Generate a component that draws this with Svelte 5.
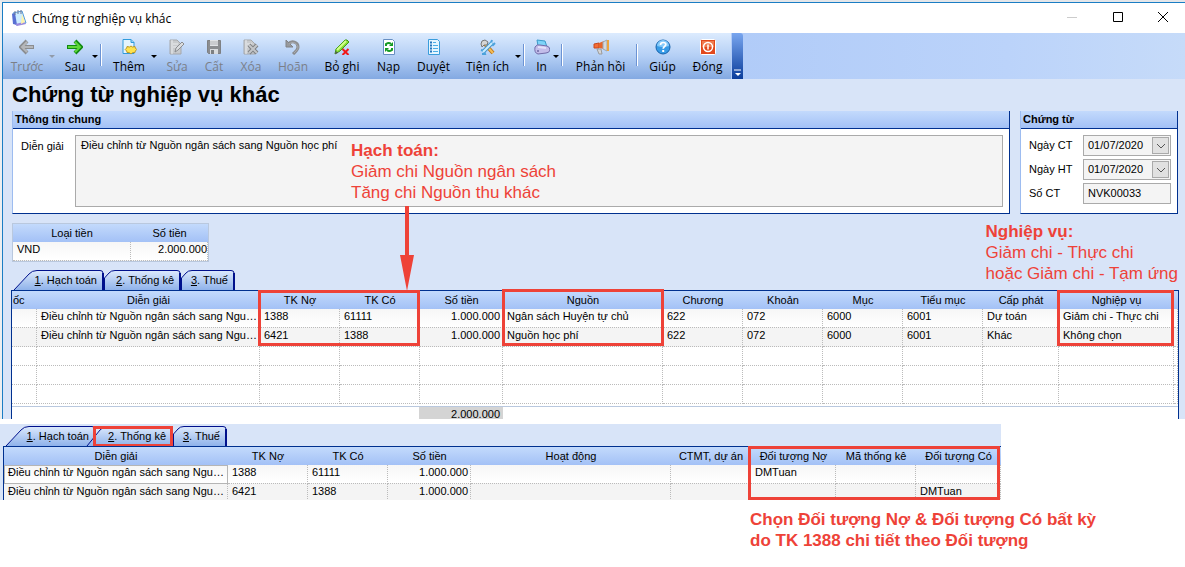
<script lang="ts">
	type Tool = {
		icon: string;
		label: string;
		width: number;
		disabled?: boolean;
		menu?: boolean;
		separator?: boolean;
	};

	const tools: Tool[] = [
		{ icon: 'back', label: 'Trước', width: 48, disabled: true, menu: true },
		{ icon: 'next', label: 'Sau', width: 38, menu: true, separator: true },
		{ icon: 'add', label: 'Thêm', width: 48, menu: true },
		{ icon: 'edit', label: 'Sửa', width: 38, disabled: true },
		{ icon: 'save', label: 'Cất', width: 36, disabled: true },
		{ icon: 'delete', label: 'Xóa', width: 38, disabled: true },
		{ icon: 'undo', label: 'Hoãn', width: 46, disabled: true },
		{ icon: 'unpost', label: 'Bỏ ghi', width: 52 },
		{ icon: 'reload', label: 'Nạp', width: 41 },
		{ icon: 'browse', label: 'Duyệt', width: 49 },
		{ icon: 'utility', label: 'Tiện ích', width: 59, menu: true, separator: true },
		{ icon: 'print', label: 'In', width: 27, menu: true, separator: true },
		{ icon: 'feedback', label: 'Phản hồi', width: 69, separator: true },
		{ icon: 'help', label: 'Giúp', width: 43 },
		{ icon: 'close', label: 'Đóng', width: 47 }
	];

	const tabs = [
		{ key: '1', label: 'Hạch toán', width: 92 },
		{ key: '2', label: 'Thống kê', width: 77 },
		{ key: '3', label: 'Thuế', width: 54 }
	];

	const description = 'Điều chỉnh từ Nguồn ngân sách sang Nguồn học phí';

	// a column without a width takes what is left
	const entryColumns = [
		{ label: 'ốc', width: 25 },
		{ label: 'Diễn giải' },
		{ label: 'TK Nợ', width: 80 },
		{ label: 'TK Có', width: 80 },
		{ label: 'Số tiền', width: 83, number: true },
		{ label: 'Nguồn', width: 160 },
		{ label: 'Chương', width: 80 },
		{ label: 'Khoản', width: 80 },
		{ label: 'Mục', width: 80 },
		{ label: 'Tiểu mục', width: 80 },
		{ label: 'Cấp phát', width: 76 },
		{ label: 'Nghiệp vụ', width: 115 },
		{ label: '', width: 4 }
	];
	const blank = entryColumns.map(() => '');
	const entryRows = [
		['', description, '1388', '61111', '1.000.000', 'Ngân sách Huyện tự chủ', '622', '072', '6000', '6001', 'Dự toán', 'Giảm chi - Thực chi', ''],
		['', description, '6421', '1388', '1.000.000', 'Nguồn học phí', '622', '072', '6000', '6001', 'Khác', 'Không chọn', ''],
		blank,
		blank,
		blank
	];

	const statColumns = [
		{ label: 'Diễn giải' },
		{ label: 'TK Nợ', width: 80 },
		{ label: 'TK Có', width: 80 },
		{ label: 'Số tiền', width: 83, number: true },
		{ label: 'Hoạt động', width: 200 },
		{ label: 'CTMT, dự án', width: 80 },
		{ label: 'Đối tượng Nợ', width: 85 },
		{ label: 'Mã thống kê', width: 80 },
		{ label: 'Đối tượng Có', width: 85 }
	];
	const statRows = [
		[description, '1388', '61111', '1.000.000', '', '', 'DMTuan', '', ''],
		[description, '6421', '1388', '1.000.000', '', '', '', '', 'DMTuan']
	];

	let dateCT = $state('01/07/2020');
	let dateHT = $state('01/07/2020');
	let voucherNo = $state('NVK00033');
	let entryTab = $state('1');
	let statTab = $state('2');

	// the first and the selected tab show their whole slope, the others only its top
	function tabPath(first: boolean, selected: boolean, w: number) {
		let start = 'M.5 20 V8 L5 3 Q7 .5 11 .5';
		if (first) {
			start = 'M2 20 L17 4 Q20 .5 25 .5';
		} else if (selected) {
			start = 'M-9 20 L4 4 Q7 .5 11 .5';
		}
		return `${start} H${w - 4} Q${w - 1} .5 ${w - 1} 3 V20`;
	}
</script>

{#snippet icon(name: string)}
	<svg class="icon" viewBox="0 0 16 16" width="16" height="16" aria-hidden="true">
		{#if name === 'back'}
			<path d="M15 8H3M8 2L2 8l6 6" fill="none" stroke="#858585" stroke-width="4" />
			<path d="M14 8H3M8 3L3 8l5 5" fill="none" stroke="#b4b4b4" stroke-width="2" />
		{:else if name === 'next'}
			<path d="M0 8h13M8 2l6 6-6 6" fill="none" stroke="#128a12" stroke-width="4" />
			<path d="M1 8h12M8 3l5 5-5 5" fill="none" stroke="#5fd838" stroke-width="2" />
		{:else if name === 'add'}
			<path d="M2 .5h8l3 3v11H2z" fill="#e4f4fe" stroke="#2f9bdc" />
			<path d="M10 .5v3h3" fill="#9bd2f5" stroke="#2f9bdc" />
			<path d="M10 7l1.500 1 2.500-.5.300 1.500 1.500 1.500-1.500 1.500-.3 1.500-2.500.2L10 15l-1.500-1.300-2.500-.2-.3-1.500L4.200 10.500 5.700 9 6 7.500 8.500 8z" fill="#ffe34d" stroke="#b8962a" />
		{:else if name === 'edit' || name === 'delete'}
			<path d="M1 1h7l4 4v10H1z" fill="#c9c9c9" stroke="#a3a3a3" />
			<path d="M3 1v14M4 5h5M4 8h6" stroke="#eee" />
			{#if name === 'edit'}
				<path d="M6 13l1-4 6-6 2 2-6 6z" fill="#ddd" stroke="#858585" />
			{:else}
				<path d="M6 6l8 8M14 6l-8 8" stroke="#777" stroke-width="4" />
				<path d="M6 6l8 8M14 6l-8 8" stroke="#c4c4c4" stroke-width="2" />
			{/if}
		{:else if name === 'save'}
			<path d="M1.500 1.500h13v13h-12l-1-1z" fill="#858585" stroke="#777" />
			<path d="M4 1h8v6H4z" fill="#e4e4e4" />
			<path d="M4 3h8M4 5h8" stroke="#b0b0b0" />
			<path d="M4 10h8v5H4z" fill="#ddd" />
			<path d="M5 11h3v4H5z" fill="#777" />
		{:else if name === 'undo'}
			<path d="M3 5C7 1 13 3 13 8c0 3-2 4-5 7" fill="none" stroke="#858585" stroke-width="3" />
			<path d="M1 1v7h7z" fill="#929292" stroke="#7a7a7a" />
			<path d="M4 5c4-3 8-1 9 3 0 2-1 3-4 6" fill="none" stroke="#a8a8a8" />
		{:else if name === 'unpost'}
			<path d="M1 15l1-5 9-9q2-1 4 2l-9 9z" fill="#86dd35" stroke="#3f9a16" />
			<path d="M3 11l9-9" stroke="#d1ff8c" stroke-width="2" />
			<path d="M1 15l1-3 2 2z" fill="#555" />
			<path d="M8.500 10l6 6M14.500 10l-6 6" stroke="#f01818" stroke-width="2" />
		{:else if name === 'reload'}
			<path d="M2.500.5h9l2 2v13h-11z" fill="#fff" stroke="#668ec2" />
			<path d="M5 7V5q3-2 5 0" fill="none" stroke="#159a23" stroke-width="2" />
			<path d="M12 3v4H8z" fill="#159a23" />
			<path d="M11 9v2q-3 2-5 0" fill="none" stroke="#159a23" stroke-width="2" />
			<path d="M4 13V9h4z" fill="#159a23" />
		{:else if name === 'browse'}
			<path d="M2.500.5h9l2 2v13h-11z" fill="#e5f6ff" stroke="#3a9ddc" />
			<path d="M7 3.500h3M7 6.500h5M7 9.500h5M7 12.500h5" stroke="#4baee6" />
			<path d="M4 3.500h2M4 6.500h2M4 9.500h2M4 12.500h2" stroke="#2576bd" stroke-width="2" />
		{:else if name === 'utility'}
			<path d="M5 5l8 9" stroke="#bb761b" stroke-width="4" />
			<path d="M5 5l8 9" stroke="#f5bd55" stroke-width="2" />
			<path d="M1 5l1-3 3-1 3 2-1 3-3 0-2 2z" fill="#d5d5d5" stroke="#777" />
			<path d="M3 13l9-9" stroke="#4b94cb" stroke-width="4" />
			<path d="M12 1l-1 3 2 2 2-2M1 11l3 1 1 3-3 0" fill="none" stroke="#4ba2dc" stroke-width="2" />
			<path d="M3 13l9-9" stroke="#c8edff" stroke-width="2" />
		{:else if name === 'print'}
			<path d="M3 1l8 1 2 6-9-1z" fill="#7ed3f8" stroke="#3a9ac9" />
			<path d="M1 8q2-3 5-2l7 1q3 1 3 4-1 3-4 3l-8 1q-4-1-3-7z" fill="#c3bdea" stroke="#726ca9" />
			<path d="M4 8l8 1" stroke="#e4e0fa" stroke-width="2" />
			<circle cx="4" cy="12" r="1" fill="#6c67a2" />
		{:else if name === 'feedback'}
			<path d="M1 5l5-1v5H1z" fill="#f36d35" stroke="#c7481d" />
			<path d="M6 4l5-2v8l-5-1z" fill="#e7662a" />
			<path d="M10 3l4-2v11l-4-2z" fill="#d4d9dc" stroke="#9ea6ab" />
			<path d="M14 1h2v11h-2z" fill="#eba63f" />
			<path d="M4 10h4l1 5H6z" fill="#d6d6d6" stroke="#9b9b9b" />
		{:else if name === 'help'}
			<circle cx="8" cy="8" r="7" fill="#379be6" stroke="#1763ac" />
			<path d="M2 7a6 6 0 0112 0q-6 2-12 0" fill="#86cbfa" />
			<path d="M5.500 6q0-2.500 2.700-2.500 2.600 0 2.600 2c0 2-2.600 2-2.600 4.200" fill="none" stroke="#fff" stroke-width="1.700" />
			<path d="M7.200 11h2v2h-2z" fill="#fff" />
		{:else if name === 'close'}
			<rect x=".5" y=".5" width="15" height="15" rx="1" fill="#e2481c" stroke="#fff" />
			<path d="M2 2h12v6H2z" fill="#ef7b50" />
			<circle cx="8" cy="8" r="4.500" fill="none" stroke="#fff" stroke-width="1.500" />
			<path d="M8 5.500v5" stroke="#fff" stroke-width="1.500" />
		{/if}
	</svg>
{/snippet}

{#snippet tabList(current: string, select: (key: string) => void)}
	<div class="tabs" role="tablist">
		{#each tabs as tab, i}
			<button class="tab" role="tab" aria-selected={tab.key === current} style:width="{tab.width}px" onclick={() => select(tab.key)}>
				<svg width={tab.width} height="20" aria-hidden="true">
					<path d={tabPath(i === 0, tab.key === current, tab.width)} fill="url(#tab-fill)" stroke="#00108c" stroke-width="1" />
					<path d="M{tab.width - 1} 3V20" stroke="#00108c" stroke-width="2" />
				</svg>
				<span><u>{tab.key}</u>. {tab.label}</span>
			</button>
		{/each}
	</div>
{/snippet}

{#snippet grid(columns: { label: string; width?: number; number?: boolean }[], rows: string[][])}
	<table>
		<colgroup>
			{#each columns as column}
				<col style:width={column.width ? `${column.width}px` : 'auto'} />
			{/each}
		</colgroup>
		<thead>
			<tr>
				{#each columns as column}
					<th>{column.label}</th>
				{/each}
			</tr>
		</thead>
		<tbody>
			{#each rows as row}
				<tr class:filled={row.some(Boolean)}>
					{#each row as cell, i}
						<td class:number={columns[i].number}>{cell}</td>
					{/each}
				</tr>
			{/each}
		</tbody>
	</table>
{/snippet}

<svg class="defs" width="0" height="0" aria-hidden="true">
	<linearGradient id="tab-fill" x1="0" y1="0" x2="0" y2="1">
		<stop offset="0" stop-color="#dce9fc" />
		<stop offset="1" stop-color="#8fb2ea" />
	</linearGradient>
</svg>

<main>
	<section class="window">
		<header class="titlebar">
			<svg width="16" height="16" viewBox="0 0 16 16" aria-hidden="true">
				<path d="M2 3l9-2 4 12-10 2z" fill="#ccecff" stroke="#599bd8" />
				<path d="M1 4l3-1 2 12-4-1z" fill="#5870d2" />
				<path d="M4 14l9-2 2 2-9 2z" fill="#9a8ade" />
				<path d="M11 4l3 8-4 2z" fill="#fff2a9" />
				<path d="M4 1v4M7 0v4M10 0v4" stroke="#6d7795" />
			</svg>
			<span class="caption">Chứng từ nghiệp vụ khác</span>
			<button aria-label="Thu nhỏ"><svg width="12" height="12"><path d="M1 6.500h10" stroke="#ccc" /></svg></button>
			<button aria-label="Phóng to"><svg width="12" height="12"><path d="M1.500 1.500h9v9h-9z" fill="none" stroke="#000" /></svg></button>
			<button aria-label="Đóng cửa sổ"><svg width="12" height="12"><path d="M1 1l10 10M11 1L1 11" stroke="#000" /></svg></button>
		</header>

		<nav class="toolbar">
			<div class="tools">
				{#each tools as tool}
					<button class="tool" disabled={tool.disabled} style:width="{tool.width}px">
						{@render icon(tool.icon)}
						<span>{tool.label}</span>
					</button>
					{#if tool.menu}
						<button class="drop" disabled={tool.disabled} aria-label="Mở {tool.label}"></button>
					{/if}
					{#if tool.separator}
						<i class="separator"></i>
					{/if}
				{/each}
			</div>
			<button class="overflow" aria-label="Tùy chọn">
				<svg width="8" height="8"><path d="M0 1h7" stroke="#fff" /><path d="M1 4h6l-3 3z" fill="#fff" /></svg>
			</button>
		</nav>

		<div class="content">
			<h1>Chứng từ nghiệp vụ khác</h1>

			<div class="panels">
				<section class="panel general">
					<h2>Thông tin chung</h2>
					<div class="panel-body">
						<label for="description">Diễn giải</label>
						<textarea id="description" readonly value={description}></textarea>
					</div>
				</section>
				<section class="panel voucher">
					<h2>Chứng từ</h2>
					<div class="fields">
						<label for="date-ct">Ngày CT</label>
						<div class="field">
							<input id="date-ct" bind:value={dateCT} />
							<button aria-label="Chọn ngày CT"><svg width="10" height="6"><path d="M1 1l4 4 4-4" fill="none" stroke="#555" /></svg></button>
						</div>
						<label for="date-ht">Ngày HT</label>
						<div class="field">
							<input id="date-ht" bind:value={dateHT} />
							<button aria-label="Chọn ngày HT"><svg width="10" height="6"><path d="M1 1l4 4 4-4" fill="none" stroke="#555" /></svg></button>
						</div>
						<label for="voucher-no">Số CT</label>
						<div class="field"><input id="voucher-no" bind:value={voucherNo} /></div>
					</div>
				</section>
			</div>

			<div class="currency">
				<table>
					<thead><tr><th>Loại tiền</th><th>Số tiền</th></tr></thead>
					<tbody><tr class="filled"><td>VND</td><td class="number">2.000.000</td></tr></tbody>
				</table>
			</div>

			{@render tabList(entryTab, (key) => (entryTab = key))}
			<div class="grid entries">
				{@render grid(entryColumns, entryRows)}
				<div class="total"><span>2.000.000</span></div>
				<div class="mark accounts"></div>
				<div class="mark source"></div>
				<div class="mark operation"></div>
			</div>
		</div>

		<div class="note note-entry">
			<strong>Hạch toán:</strong><br />
			Giảm chi Nguồn ngân sách<br />
			Tăng chi Nguồn thu khác
		</div>
		<svg class="arrow" width="16" height="85" viewBox="0 0 16 85" aria-hidden="true">
			<path d="M6 0h4v49h5L8 85 1 49h5z" fill="#ee4238" />
		</svg>
		<div class="note note-operation">
			<strong>Nghiệp vụ:</strong><br />
			Giảm chi - Thực chi<br />
			hoặc Giảm chi - Tạm ứng
		</div>
	</section>

	<section class="statistics">
		{@render tabList(statTab, (key) => (statTab = key))}
		<div class="mark active-tab"></div>
		<div class="grid">
			{@render grid(statColumns, statRows)}
			<div class="mark objects"></div>
		</div>
	</section>

	<p class="note note-objects">
		<strong>Chọn Đối tượng Nợ & Đối tượng Có bất kỳ<br />do TK 1388 chi tiết theo Đối tượng</strong>
	</p>
</main>

<style>
	:global(body) {
		background: #fff;
	}

	main {
		font-family: 'Liberation Sans', Arial, sans-serif;
		font-size: 11px;
		color: #000;
	}

	button,
	input,
	textarea {
		box-sizing: border-box;
		margin: 0;
		padding: 0;
		border: 0;
		border-radius: 0;
		background: none;
		font: inherit;
		color: inherit;
	}

	.defs {
		position: absolute;
	}

	.window {
		position: relative;
		border-top: 2px solid #e4e6e9;
		border-left: 2px solid #eceef0;
		background: #d8e4f8;
	}

	.titlebar {
		display: flex;
		align-items: center;
		height: 30px;
		padding-left: 8px;
		border-top: 1px solid #1a7dc4;
		border-left: 1px solid #1a7dc4;
		background: #fff;
	}

	.caption {
		flex: 1;
		padding-left: 5px;
		font: 12px 'Open Sans', sans-serif;
	}

	.titlebar button {
		width: 46px;
		height: 28px;
	}

	.titlebar button:last-child {
		width: 44px;
	}

	.toolbar {
		display: flex;
		height: 46px;
		border-left: 1px solid #1a7dc4;
		background: linear-gradient(90deg, #b0cbf8 60%, #bbd3fa 85%, #c6dbf9);
	}

	.tools {
		display: flex;
		background: linear-gradient(#dcebfe, #b4cff5 50%, #83a9e2);
	}

	.tool {
		display: flex;
		flex-direction: column;
		align-items: center;
		padding-top: 6px;
		font: 12px/18px 'Open Sans', sans-serif;
		white-space: nowrap;
	}

	.tool:disabled {
		color: #7b7f88;
	}

	.tool:disabled .icon {
		opacity: 0.9;
	}

	.icon {
		display: block;
	}

	.tool span {
		padding-top: 3px;
	}

	.drop {
		width: 9px;
		height: 46px;
		margin-left: -4px;
	}

	.drop::before {
		content: '';
		display: block;
		margin: 0 auto;
		width: 0;
		border: 3px solid transparent;
		border-top-color: #000;
		border-bottom: 0;
	}

	.drop:disabled::before {
		border-top-color: #919baa;
	}

	.separator {
		width: 1px;
		height: 22px;
		margin: 11px 3px 0 1px;
		border-left: 1px solid #6c93d4;
		background: #fff;
	}

	.overflow {
		width: 11px;
		margin-left: 1px;
		padding: 34px 0 0 2px;
		border-radius: 0 3px 0 0;
		background: linear-gradient(#79a6ef, #0a3d9c);
	}

	.overflow svg {
		display: block;
	}

	.content {
		padding: 0 6px 0 8px;
		border-left: 1px solid #1a7dc4;
	}

	h1 {
		margin: 0;
		padding-left: 1px;
		font-size: 22px;
		line-height: 32px;
	}

	.panels {
		display: flex;
		gap: 10px;
		padding: 0 1px;
	}

	.panel {
		box-sizing: border-box;
		border-left: 1px solid #9dbcf0;
		border-right: 1px solid #00308f;
		border-bottom: 1px solid #00308f;
		background: #fff;
	}

	.general {
		flex: 1;
	}

	.voucher {
		width: 158px;
	}

	h2 {
		margin: 0;
		padding-left: 2px;
		border-bottom: 1px solid #00308f;
		background: linear-gradient(#c3dafc, #a3c1f6);
		font-size: 11px;
		line-height: 17px;
	}

	.panel-body {
		display: flex;
		padding: 6px;
	}

	.panel-body label {
		width: 54px;
		padding-left: 2px;
		line-height: 22px;
	}

	textarea {
		flex: 1;
		height: 72px;
		padding: 2px 5px;
		border: 1px solid #aaa;
		background: #f4f4f4;
		line-height: 14px;
		resize: none;
	}

	.fields {
		display: grid;
		grid-template-columns: 54px minmax(0, 1fr);
		row-gap: 3px;
		padding: 6px 6px 0 8px;
		line-height: 21px;
	}

	.field {
		display: flex;
		box-sizing: border-box;
		height: 21px;
		padding: 1px;
		border: 1px solid #aaa;
		background: #f4f4f4;
	}

	.field input {
		flex: 1;
		min-width: 0;
		padding-left: 3px;
	}

	.field button {
		width: 17px;
		border: 1px solid #aaa;
		background: #e1e1e1;
	}

	.field svg {
		display: block;
		margin: auto;
	}

	table {
		width: 100%;
		border-spacing: 0;
		table-layout: fixed;
	}

	th {
		height: 18px;
		padding: 0;
		background: linear-gradient(#c3dafc, #a3c1f6);
		font-weight: normal;
		line-height: 18px;
		white-space: nowrap;
	}

	.entries :global(th:first-child) {
		padding-left: 1px;
		text-align: left;
	}

	td {
		box-sizing: border-box;
		height: 19px;
		padding: 0 2px 0 4px;
		overflow: hidden;
		border-right: 1px dotted #bbb;
		border-bottom: 1px dotted #bbb;
		line-height: 14px;
		text-overflow: ellipsis;
		vertical-align: top;
		white-space: nowrap;
	}

	.filled td {
		background: linear-gradient(#f6f6f6, #fff);
	}

	.filled:nth-child(2) td {
		background: #f4f4f4;
	}

	.number {
		text-align: right;
	}

	.currency {
		width: 195px;
		margin: 9px 0 8px 1px;
		border: 1px solid #b9c8de;
	}

	.currency th:first-child {
		width: 118px;
	}

	.currency .number {
		padding-right: 0;
	}

	.tabs {
		display: flex;
		height: 20px;
		padding-left: 1px;
	}

	.tab {
		position: relative;
		padding-right: 7px;
		line-height: 20px;
		text-align: right;
		white-space: nowrap;
	}

	.tab svg {
		position: absolute;
		inset: 0;
		overflow: visible;
	}

	.tab span {
		position: relative;
	}

	.grid {
		position: relative;
		border-top: 1px solid #00308f;
		border-left: 1px solid #00308f;
		background: #fff;
	}

	.entries {
		border-right: 1px solid #00308f;
	}

	.total {
		display: flex;
		justify-content: flex-end;
		height: 12px;
		margin-top: 2px;
		padding-right: 675px;
		overflow: hidden;
		border-top: 1px solid #b9c8de;
	}

	.total span {
		box-sizing: border-box;
		width: 84px;
		padding-right: 3px;
		background: #d4d4d4;
		line-height: 14px;
		text-align: right;
	}

	.mark {
		position: absolute;
		box-sizing: border-box;
		border: 3px solid #ee4238;
		pointer-events: none;
	}

	.accounts {
		top: -1px;
		right: 758px;
		width: 162px;
		height: 56px;
	}

	.source {
		top: -2px;
		right: 514px;
		width: 162px;
		height: 57px;
	}

	.operation {
		top: -1px;
		right: 4px;
		width: 117px;
		height: 56px;
	}

	.note {
		color: #ee4238;
		font-size: 17px;
		line-height: 21px;
		white-space: nowrap;
	}

	.note-entry {
		position: absolute;
		top: 138px;
		left: 349px;
	}

	.note-operation {
		position: absolute;
		top: 219px;
		right: 7px;
	}

	.arrow {
		position: absolute;
		top: 204px;
		left: 397px;
	}

	.statistics {
		position: relative;
		width: calc(100% - 184px);
		height: 76px;
		margin-top: 5px;
		overflow: hidden;
		background: #d8e4f8;
	}

	.statistics .tabs {
		padding: 2px 0 0 4px;
	}

	.statistics .grid {
		margin-left: 3px;
	}

	.statistics tbody tr:first-child td:first-child {
		border: 1px solid #b5b5b5;
		padding-left: 3px;
		line-height: 12px;
	}

	.active-tab {
		top: 2px;
		left: 93px;
		width: 80px;
		height: 21px;
	}

	.objects {
		top: -1px;
		right: 1px;
		width: 252px;
		height: 54px;
	}

	.note-objects {
		margin: 0;
		padding: 9px 0 0 750px;
	}
</style>
